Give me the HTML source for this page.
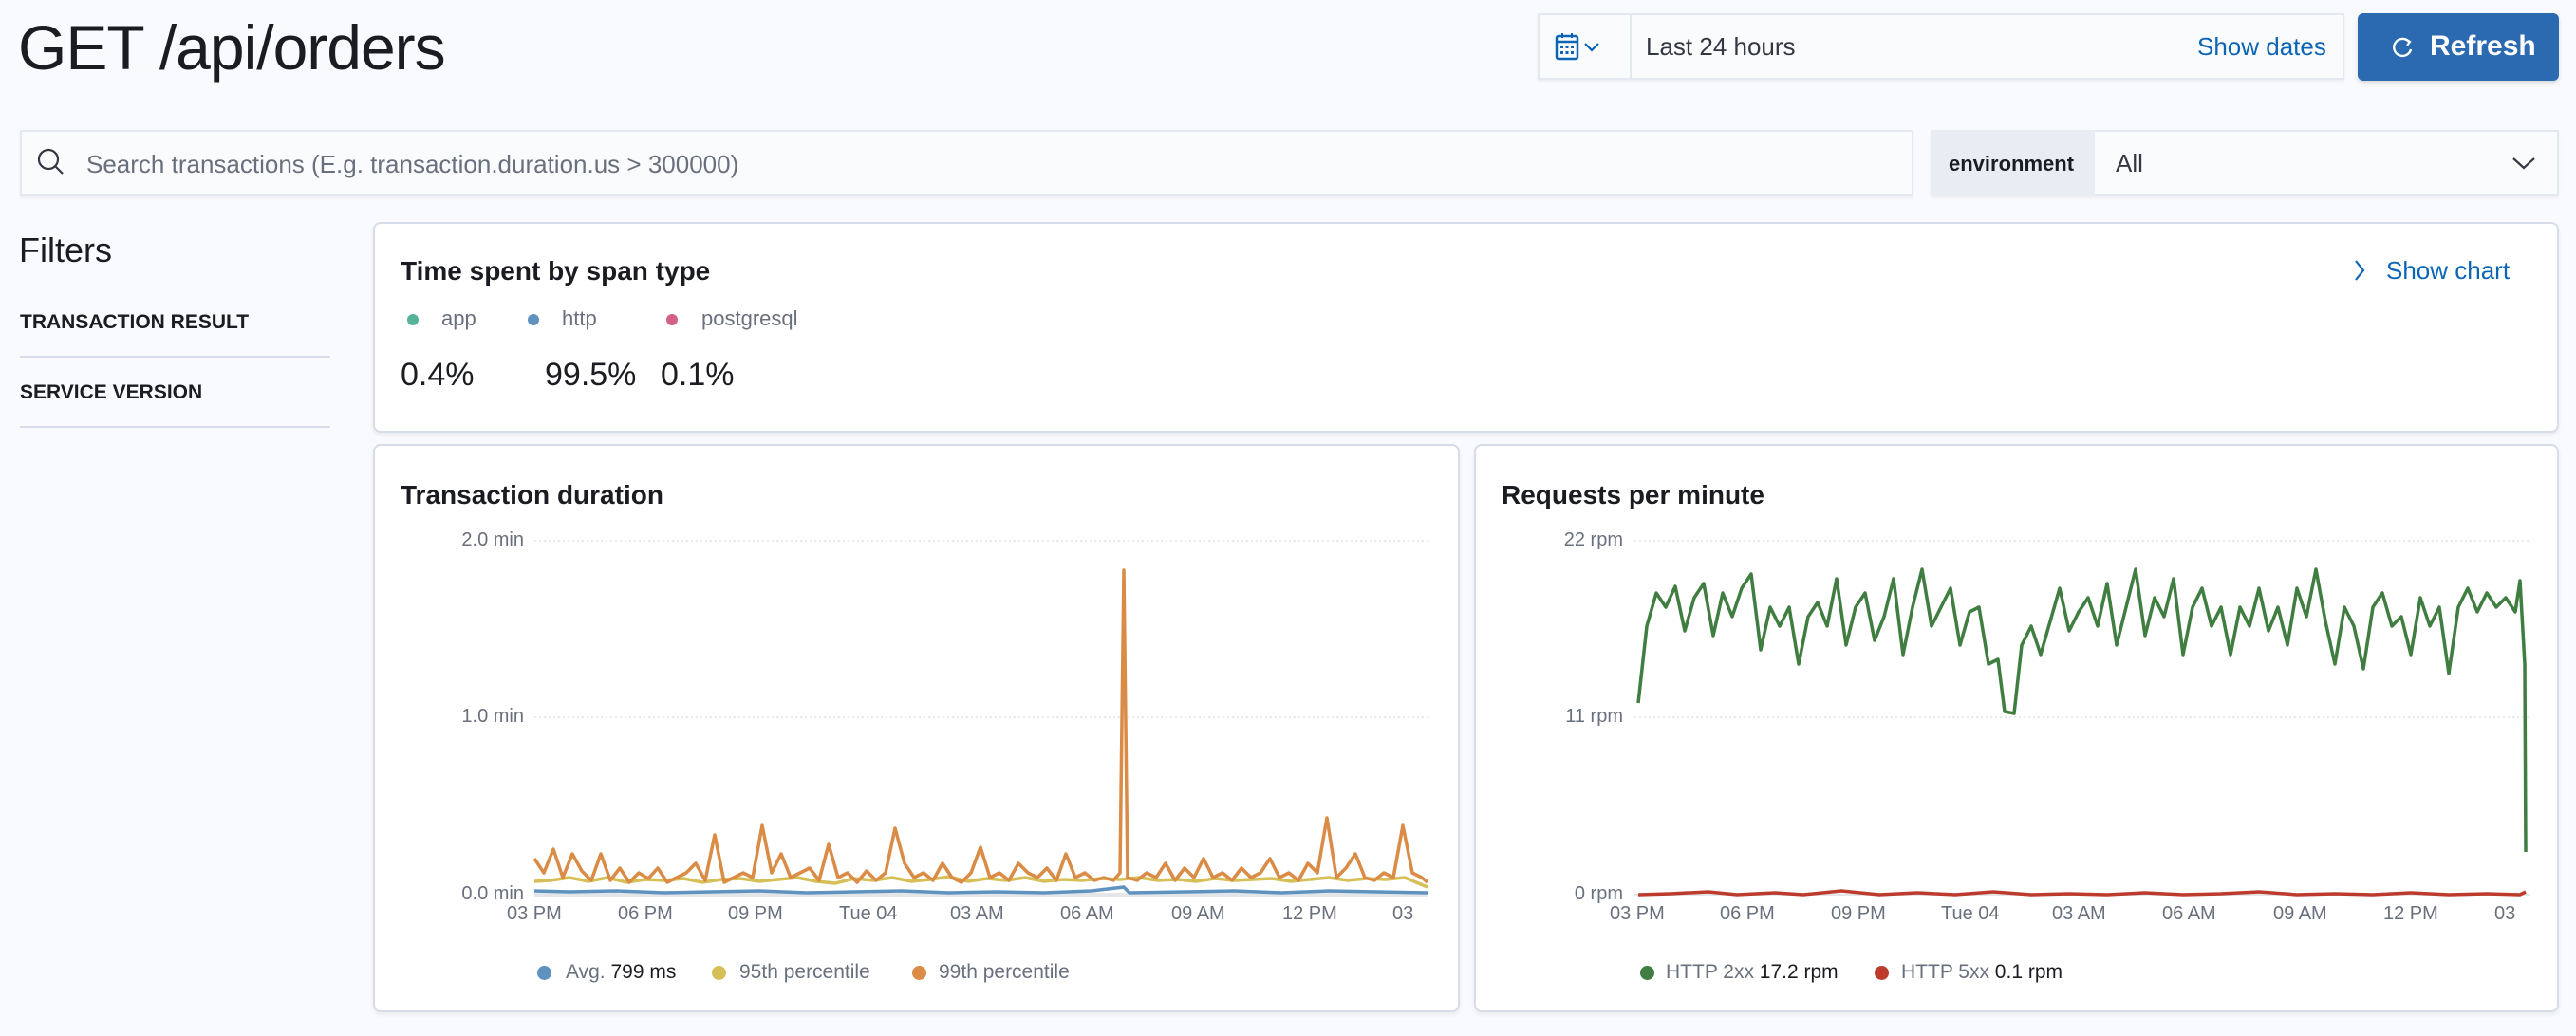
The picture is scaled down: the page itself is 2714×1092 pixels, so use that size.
<!DOCTYPE html>
<html><head><meta charset="utf-8"><style>
*{box-sizing:border-box;margin:0;padding:0}
body{width:2714px;height:1092px;background:#f9fafd;font-family:"Liberation Sans",sans-serif;color:#1a1c21;position:relative;overflow:hidden}
.a{position:absolute}
.card{position:absolute;background:#fff;border:2px solid #d6dce8;border-radius:8px;box-shadow:0 3px 4px rgba(0,0,0,.06)}
.lnk{color:#0b64b4}
.gray{color:#69707d}
.ax{font-size:20px;color:#69707d;position:absolute;white-space:nowrap}
</style></head><body>
<div class="a" style="left:19px;top:12px;font-size:66px;font-weight:300;letter-spacing:-1px">GET /api/orders</div>

<div class="a" style="left:1620px;top:14px;width:850px;height:70px;border:2px solid #e4e8f0;background:#fafbfd;box-shadow:0 2px 3px rgba(0,0,0,.05)"></div>
<div class="a" style="left:1717px;top:16px;width:2px;height:66px;background:#e4e8f0"></div>
<svg class="a" style="left:1638px;top:34px" width="54" height="32" viewBox="0 0 54 32"><rect x="2" y="4" width="22" height="24" rx="2" fill="none" stroke="#0b64b4" stroke-width="2.5"/><line x1="2" y1="10" x2="24" y2="10" stroke="#0b64b4" stroke-width="2.5"/><line x1="8" y1="1" x2="8" y2="6" stroke="#0b64b4" stroke-width="2"/><line x1="18" y1="1" x2="18" y2="6" stroke="#0b64b4" stroke-width="2"/><g fill="#0b64b4"><rect x="6" y="14" width="3" height="3"/><rect x="11.5" y="14" width="3" height="3"/><rect x="17" y="14" width="3" height="3"/><rect x="6" y="20" width="3" height="3"/><rect x="11.5" y="20" width="3" height="3"/><rect x="17" y="20" width="3" height="3"/></g><path d="M32 12 L39 19 L46 12" fill="none" stroke="#0b64b4" stroke-width="2.2"/></svg>
<div class="a" style="left:1734px;top:34px;font-size:26px;color:#343741">Last 24 hours</div>
<div class="a lnk" style="left:2315px;top:34px;font-size:26px">Show dates</div>
<div class="a" style="left:2484px;top:14px;width:212px;height:71px;background:#2b6ab0;border-radius:6px;box-shadow:0 3px 4px rgba(0,0,0,.12)"></div>
<svg class="a" style="left:2518px;top:37px" width="26" height="26" viewBox="0 0 26 26"><path d="M20 7 A9 9 0 1 0 22 15" fill="none" stroke="#fff" stroke-width="2.4"/><path d="M16 4 L21 7 L18 11" fill="none" stroke="#fff" stroke-width="2.2"/></svg>
<div class="a" style="left:2560px;top:32px;font-size:30px;color:#fff;font-weight:bold">Refresh</div>

<div class="a" style="left:21px;top:137px;width:1995px;height:70px;border:2px solid #e4e8f0;background:#fafbfd;box-shadow:0 2px 3px rgba(0,0,0,.05)"></div>
<svg class="a" style="left:38px;top:155px" width="32" height="32" viewBox="0 0 32 32"><circle cx="13" cy="13" r="10" fill="none" stroke="#343741" stroke-width="2.2"/><line x1="20" y1="20" x2="28" y2="28" stroke="#343741" stroke-width="2.2"/></svg>
<div class="a" style="left:91px;top:158px;font-size:26px;color:#69707d">Search transactions (E.g. transaction.duration.us &gt; 300000)</div>

<div class="a" style="left:2034px;top:137px;width:662px;height:70px;border:2px solid #e4e8f0;background:#fafbfd;box-shadow:0 2px 3px rgba(0,0,0,.05)"></div>
<div class="a" style="left:2034px;top:137px;width:173px;height:70px;background:#e9ecf2"></div>
<div class="a" style="left:2053px;top:160px;font-size:22px;font-weight:bold">environment</div>
<div class="a" style="left:2229px;top:157px;font-size:26px;color:#343741">All</div>
<svg class="a" style="left:2646px;top:162px" width="26" height="20"><path d="M2 5 L13 15 L24 5" fill="none" stroke="#343741" stroke-width="2.2"/></svg>

<div class="a" style="left:20px;top:243px;font-size:36px">Filters</div>
<div class="a" style="left:21px;top:328px;font-size:21px;font-weight:bold">TRANSACTION RESULT</div>
<div class="a" style="left:21px;top:375px;width:327px;height:2px;background:#d6dce8"></div>
<div class="a" style="left:21px;top:402px;font-size:21px;font-weight:bold">SERVICE VERSION</div>
<div class="a" style="left:21px;top:449px;width:327px;height:2px;background:#d6dce8"></div>

<div class="card" style="left:393px;top:234px;width:2303px;height:222px"></div>
<div class="a" style="left:422px;top:270px;font-size:28px;font-weight:bold">Time spent by span type</div>
<svg class="a" style="left:2478px;top:272px" width="16" height="26"><path d="M4 3 L12 13 L4 23" fill="none" stroke="#0b64b4" stroke-width="2.2"/></svg>
<div class="a lnk" style="left:2514px;top:270px;font-size:26px">Show chart</div>
<div class="a" style="left:429px;top:331px;width:12px;height:12px;border-radius:50%;background:#54b399"></div>
<div class="a gray" style="left:465px;top:323px;font-size:22px">app</div>
<div class="a" style="left:556px;top:331px;width:12px;height:12px;border-radius:50%;background:#6092c0"></div>
<div class="a gray" style="left:592px;top:323px;font-size:22px">http</div>
<div class="a" style="left:702px;top:331px;width:12px;height:12px;border-radius:50%;background:#d36086"></div>
<div class="a gray" style="left:739px;top:323px;font-size:22px">postgresql</div>
<div class="a" style="left:422px;top:376px;font-size:34px">0.4%</div>
<div class="a" style="left:574px;top:376px;font-size:34px">99.5%</div>
<div class="a" style="left:696px;top:376px;font-size:34px">0.1%</div>

<div class="card" style="left:393px;top:468px;width:1145px;height:599px"></div>
<div class="card" style="left:1553px;top:468px;width:1143px;height:599px"></div>
<div class="a" style="left:422px;top:506px;font-size:28px;font-weight:bold">Transaction duration</div>
<div class="a" style="left:1582px;top:506px;font-size:28px;font-weight:bold">Requests per minute</div>

<svg class="a" style="left:0;top:0" width="2714" height="1092">
<g stroke="#e1e4ea" stroke-width="1.5" stroke-dasharray="2 3"><line x1="563" y1="570" x2="1504" y2="570"/><line x1="563" y1="756" x2="1504" y2="756"/><line x1="1722" y1="570" x2="2666" y2="570"/><line x1="1722" y1="756" x2="2666" y2="756"/></g>
<line x1="563" y1="943" x2="1504" y2="943" stroke="#e4e6ea" stroke-width="4"/>
<line x1="1722" y1="943" x2="2666" y2="943" stroke="#e4e6ea" stroke-width="2"/>
<polyline fill="none" stroke="#6092c0" stroke-width="3.5" points="563,939 600,940 650,939 700,941 750,940 800,939 850,941 900,940 950,939 1000,941 1050,940 1100,941 1150,939 1184,935 1190,941 1250,940 1300,939 1350,941 1400,939 1450,940 1504,941"/>
<polyline fill="none" stroke="#d6bf57" stroke-width="3.5" points="563,929 580,928 600,925 620,929 640,925 660,930 680,927 700,928 720,926 740,930 760,927 780,926 800,929 820,927 840,925 860,929 880,931 900,926 920,928 940,925 960,929 980,927 1000,924 1020,929 1040,926 1060,928 1080,925 1100,929 1120,927 1140,928 1160,926 1180,927 1200,925 1220,928 1240,927 1260,929 1280,926 1300,928 1320,927 1340,926 1360,929 1380,927 1400,925 1420,928 1440,926 1460,927 1480,925 1504,935"/>
<polyline fill="none" stroke="#da8b45" stroke-width="3.5" stroke-linejoin="round" points="563,905 573,920 583,895 593,925 603,900 613,918 623,928 633,900 643,928 653,915 663,930 673,920 683,926 693,915 703,930 713,925 723,920 733,910 743,928 753,880 763,930 773,925 783,920 793,925 803,870 813,920 823,900 833,925 843,920 853,915 863,928 873,890 883,925 893,920 903,930 913,918 923,928 933,920 943,873 953,910 963,925 973,920 983,928 993,910 1003,925 1013,930 1023,920 1033,893 1043,925 1053,920 1063,928 1073,910 1083,920 1093,925 1103,915 1113,928 1123,900 1133,925 1143,920 1153,928 1163,925 1173,928 1180,920 1184,601 1188,925 1198,928 1208,920 1218,925 1228,910 1238,928 1248,915 1258,925 1268,905 1278,925 1288,920 1298,928 1308,915 1318,925 1328,920 1338,905 1348,925 1358,920 1368,928 1378,910 1388,920 1398,862 1408,925 1418,915 1428,900 1438,925 1448,928 1458,920 1468,925 1478,870 1488,920 1498,925 1504,930"/>
<polyline fill="none" stroke="#bd3b2d" stroke-width="3.5" points="1726,943 1760,942 1800,940 1830,943 1870,941 1900,943 1940,939 1980,943 2020,941 2060,943 2100,940 2140,943 2180,942 2220,943 2260,941 2300,943 2340,942 2380,940 2420,943 2460,942 2500,943 2540,941 2580,943 2620,942 2655,943 2661,940"/>
<polyline fill="none" stroke="#3f7d40" stroke-width="3.5" stroke-linejoin="round" points="1726,741 1735,660 1745,625 1755,640 1765,618 1775,665 1785,630 1795,615 1805,670 1815,625 1825,650 1835,620 1845,605 1855,685 1865,640 1875,660 1885,640 1895,700 1905,650 1915,635 1925,660 1935,610 1945,680 1955,640 1965,625 1975,675 1985,650 1995,610 2005,690 2015,640 2025,600 2035,660 2045,640 2055,620 2065,680 2075,645 2085,640 2095,700 2105,695 2112,750 2122,752 2130,680 2140,660 2150,690 2160,655 2170,620 2180,665 2190,645 2200,630 2210,660 2220,615 2230,680 2240,640 2250,600 2260,670 2270,630 2280,650 2290,610 2300,690 2310,640 2320,620 2330,660 2340,640 2350,690 2360,640 2370,660 2380,620 2390,665 2400,640 2410,680 2420,620 2430,650 2440,600 2450,655 2460,700 2470,640 2480,660 2490,705 2500,640 2510,625 2520,660 2530,650 2540,690 2550,630 2560,660 2570,640 2580,710 2590,640 2600,620 2610,645 2620,625 2630,640 2640,630 2650,645 2655,612 2660,700 2661,898"/>
</svg>
<div class="ax" style="left:472px;top:558px;width:80px;text-align:right">2.0 min</div>
<div class="ax" style="left:472px;top:744px;width:80px;text-align:right">1.0 min</div>
<div class="ax" style="left:472px;top:931px;width:80px;text-align:right">0.0 min</div>
<div class="ax" style="left:1630px;top:558px;width:80px;text-align:right">22 rpm</div>
<div class="ax" style="left:1630px;top:744px;width:80px;text-align:right">11 rpm</div>
<div class="ax" style="left:1630px;top:931px;width:80px;text-align:right">0 rpm</div>
<div class="ax" style="left:534px;top:952px">03 PM</div><div class="ax" style="left:651px;top:952px">06 PM</div><div class="ax" style="left:767px;top:952px">09 PM</div><div class="ax" style="left:884px;top:952px">Tue 04</div><div class="ax" style="left:1001px;top:952px">03 AM</div><div class="ax" style="left:1117px;top:952px">06 AM</div><div class="ax" style="left:1234px;top:952px">09 AM</div><div class="ax" style="left:1351px;top:952px">12 PM</div><div class="ax" style="left:1467px;top:952px">03</div>
<div class="ax" style="left:1696px;top:952px">03 PM</div><div class="ax" style="left:1812px;top:952px">06 PM</div><div class="ax" style="left:1929px;top:952px">09 PM</div><div class="ax" style="left:2045px;top:952px">Tue 04</div><div class="ax" style="left:2162px;top:952px">03 AM</div><div class="ax" style="left:2278px;top:952px">06 AM</div><div class="ax" style="left:2395px;top:952px">09 AM</div><div class="ax" style="left:2511px;top:952px">12 PM</div><div class="ax" style="left:2628px;top:952px">03</div>
<div class="a" style="left:566px;top:1018px;width:15px;height:15px;border-radius:50%;background:#6092c0"></div>
<div class="a" style="left:596px;top:1013px;font-size:21px"><span class="gray">Avg.</span> 799 ms</div>
<div class="a" style="left:750px;top:1018px;width:15px;height:15px;border-radius:50%;background:#d6bf57"></div>
<div class="a gray" style="left:779px;top:1013px;font-size:21px">95th percentile</div>
<div class="a" style="left:961px;top:1018px;width:15px;height:15px;border-radius:50%;background:#da8b45"></div>
<div class="a gray" style="left:989px;top:1013px;font-size:21px">99th percentile</div>
<div class="a" style="left:1728px;top:1018px;width:15px;height:15px;border-radius:50%;background:#3f7d40"></div>
<div class="a" style="left:1755px;top:1013px;font-size:21px"><span class="gray">HTTP 2xx</span> 17.2 rpm</div>
<div class="a" style="left:1975px;top:1018px;width:15px;height:15px;border-radius:50%;background:#bd3b2d"></div>
<div class="a" style="left:2003px;top:1013px;font-size:21px"><span class="gray">HTTP 5xx</span> 0.1 rpm</div>
</body></html>
